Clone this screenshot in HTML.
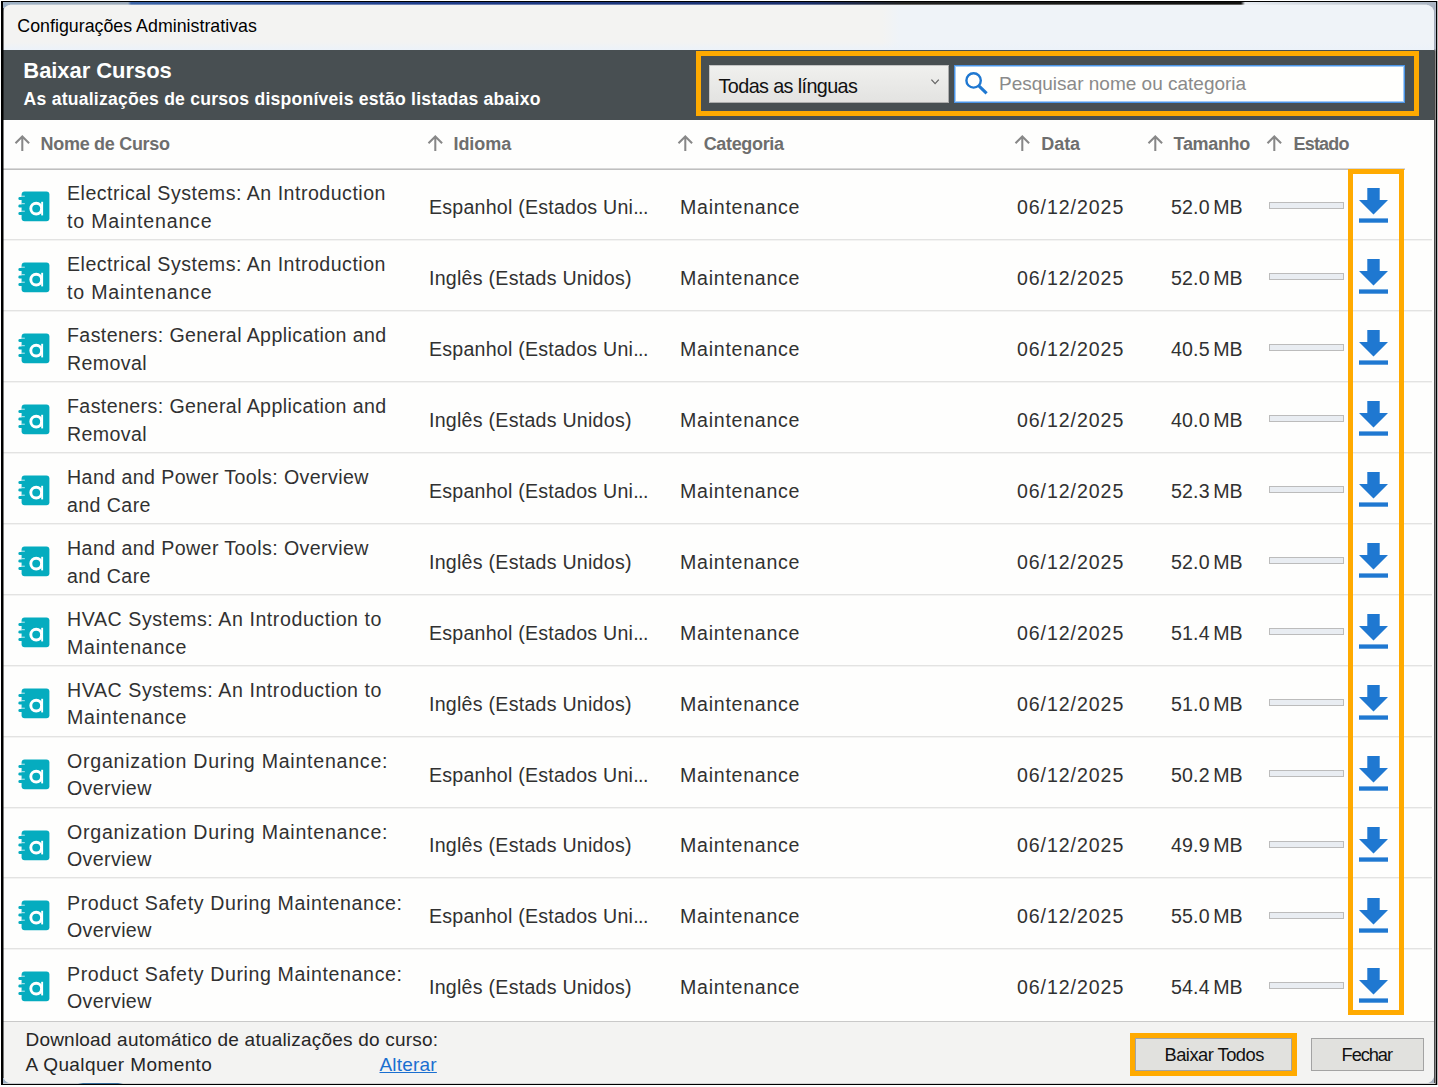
<!DOCTYPE html><html lang="pt-BR"><head><meta charset="utf-8"><title>Configurações Administrativas</title>
<style>
*{box-sizing:border-box}
html,body{margin:0;padding:0}
body{width:1438px;height:1087px;overflow:hidden;background:#fff;position:relative;font-family:"Liberation Sans", sans-serif;color:#262626}
.abs{position:absolute}
.t{position:absolute;white-space:pre;line-height:30px;height:30px}
#frame{left:1px;top:1px;width:1436px;height:1084px;background:#000}
#edgeR{left:1437px;top:1px;width:1px;height:1084px;background:#b8b8b8}
#desk{left:3px;top:2px;width:1433px;height:1082px;background:linear-gradient(90deg,#9fb2c6 0,#9aa9ba 125px,#3e66a8 128px,#1f3d8c 420px,#1a2f6e 800px,#222 900px,#111 1238px,#e6ebf2 1242px,#aab4c2 100%)}
#win{left:3px;top:5px;width:1431px;height:1078px;border-radius:8px;overflow:hidden;background:#f3f3f2}
#c{left:-3px;top:-5px;width:1438px;height:1087px}
#title{left:0;top:0;width:1438px;height:50px;background:linear-gradient(90deg,#f3f3f2 0,#f3f3f2 882px,#eff3f8 900px,#eff3f8 100%)}
#dark{left:0;top:50px;width:1438px;height:70px;background:#484f52}
#list{left:0;top:120px;width:1438px;height:901px;background:#fefefd}
#foot{left:0;top:1021px;width:1438px;height:66px;background:#f3f3f2;border-top:1px solid #c9c9c9}
.obox{position:absolute;border:5px solid #ffaa00}
.hd{font-weight:700;color:#6e6e6e;font-size:18px}
.sep{position:absolute;left:0;height:2px;background:linear-gradient(180deg,#e3e3e2 0,#e3e3e2 50%,#f3f3f2 50%,#f3f3f2 100%);width:1432px}
.cell{color:#313131}
.btn{position:absolute;background:#e1e1de;border:1px solid #a3a3a3}
.pb{position:absolute;left:1269px;width:75px;height:7px;border:1px solid #bcbcbc;background:#e9edf2}
</style></head><body>
<div id="frame" class="abs"></div><div id="edgeR" class="abs"></div><div id="desk" class="abs"></div><div class="abs" style="left:3px;top:1083px;width:1432px;height:1px;background:linear-gradient(90deg,#c9ccd0 0,#c9ccd0 75px,#3b6f9c 80px,#3b6f9c 115px,#d5d5d5 120px,#d0d0d0 100%)"></div><div class="abs" style="left:3px;top:8px;width:1px;height:1070px;background:rgba(0,0,0,0.5);z-index:5"></div><div class="abs" style="left:1434px;top:5px;width:1px;height:1078px;background:linear-gradient(180deg,#a4acba 0,#a4acba 44px,#4a4a4a 46px,#4a4a4a 100%)"></div><div class="abs" style="left:1435px;top:3px;width:1px;height:1081px;background:linear-gradient(180deg,#b4bccb 0,#b4bccb 46px,#8a8a8a 48px,#8a8a8a 100%)"></div>
<div class="abs" style="left:10px;top:4px;width:1417px;height:1px;background:rgba(243,243,242,0.35)"></div><div id="win" class="abs"><div id="c" class="abs">
<div id="title" class="abs"></div><div class="abs" style="left:0;top:42px;width:1438px;height:8px;background:linear-gradient(180deg,rgba(236,242,249,0),rgba(236,242,249,1))"></div>
<div class="t " style="left:17.3px;top:11.43px;font-size:17.8px;letter-spacing:0.015px;color:#000;">Configurações Administrativas</div>
<div id="dark" class="abs"></div>
<div class="t " style="left:23.3px;top:55.78px;font-size:22px;letter-spacing:-0.057px;color:#fff;font-weight:700;">Baixar Cursos</div>
<div class="t " style="left:23.6px;top:84.10px;font-size:17.6px;letter-spacing:0.228px;color:#fff;font-weight:700;">As atualizações de cursos disponíveis estão listadas abaixo</div>
<div class="obox" style="left:696px;top:51px;width:723px;height:65px"></div>
<div class="abs" style="left:709px;top:65px;width:240px;height:38px;border:1px solid #adadad;border-top-color:#c4c4c4;border-left-color:#c4c4c4;background:linear-gradient(#f0f0ee,#e3e3e1)"></div>
<div class="t " style="left:718.6px;top:70.54px;font-size:19.8px;letter-spacing:-0.611px;color:#111;">Todas as línguas</div>
<svg class="abs" style="left:929px;top:77px" width="12" height="10" viewBox="0 0 12 10"><path d="M2.4 2.6 L6.1 6.6 L9.8 2.6" fill="none" stroke="#666" stroke-width="1.35"/></svg>
<div class="abs" style="left:954px;top:65px;width:451px;height:38px;border:1px solid #4a94e6;box-shadow:inset 0 0 0 1px rgba(90,160,240,0.55);background:#fffffd"></div>
<svg class="abs" style="left:962.6px;top:70.2px" width="28" height="28" viewBox="0 0 28 28"><circle cx="10.6" cy="10.4" r="7.2" fill="none" stroke="#1f78d1" stroke-width="2.4"/><path d="M15.6 15.6 L23.6 23.4" stroke="#1f78d1" stroke-width="3.1" stroke-linecap="butt"/></svg>
<div class="t " style="left:999px;top:68.92px;font-size:19px;letter-spacing:0px;color:#8a8a8a;">Pesquisar nome ou categoria</div>
<div id="list" class="abs"></div>
<svg class="abs" style="left:13.7px;top:135px" width="17" height="17" viewBox="0 0 17 17"><path d="M8.3 1.4 V16 M1.5 8.3 L8.3 1.5 L15.1 8.3" fill="none" stroke="#888" stroke-width="2.05" stroke-linecap="butt" stroke-linejoin="miter"/></svg>
<div class="t hd" style="left:40.5px;top:129.26px;font-size:18px;letter-spacing:-0.29px;">Nome de Curso</div>
<svg class="abs" style="left:426.7px;top:135px" width="17" height="17" viewBox="0 0 17 17"><path d="M8.3 1.4 V16 M1.5 8.3 L8.3 1.5 L15.1 8.3" fill="none" stroke="#888" stroke-width="2.05" stroke-linecap="butt" stroke-linejoin="miter"/></svg>
<div class="t hd" style="left:453.5px;top:129.26px;font-size:18px;letter-spacing:-0.07px;">Idioma</div>
<svg class="abs" style="left:677.2px;top:135px" width="17" height="17" viewBox="0 0 17 17"><path d="M8.3 1.4 V16 M1.5 8.3 L8.3 1.5 L15.1 8.3" fill="none" stroke="#888" stroke-width="2.05" stroke-linecap="butt" stroke-linejoin="miter"/></svg>
<div class="t hd" style="left:703.7px;top:129.26px;font-size:18px;letter-spacing:-0.34px;">Categoria</div>
<svg class="abs" style="left:1014.4000000000001px;top:135px" width="17" height="17" viewBox="0 0 17 17"><path d="M8.3 1.4 V16 M1.5 8.3 L8.3 1.5 L15.1 8.3" fill="none" stroke="#888" stroke-width="2.05" stroke-linecap="butt" stroke-linejoin="miter"/></svg>
<div class="t hd" style="left:1041.2px;top:129.26px;font-size:18px;letter-spacing:-0.03px;">Data</div>
<svg class="abs" style="left:1146.7px;top:135px" width="17" height="17" viewBox="0 0 17 17"><path d="M8.3 1.4 V16 M1.5 8.3 L8.3 1.5 L15.1 8.3" fill="none" stroke="#888" stroke-width="2.05" stroke-linecap="butt" stroke-linejoin="miter"/></svg>
<div class="t hd" style="left:1173.6px;top:129.26px;font-size:18px;letter-spacing:-0.34px;">Tamanho</div>
<svg class="abs" style="left:1266.2px;top:135px" width="17" height="17" viewBox="0 0 17 17"><path d="M8.3 1.4 V16 M1.5 8.3 L8.3 1.5 L15.1 8.3" fill="none" stroke="#888" stroke-width="2.05" stroke-linecap="butt" stroke-linejoin="miter"/></svg>
<div class="t hd" style="left:1293.5px;top:129.26px;font-size:18px;letter-spacing:-0.8px;">Estado</div>
<div class="abs" style="left:0;top:168px;width:1405px;height:1px;background:#d9d9d9"></div><div class="abs" style="left:0;top:169px;width:1405px;height:1px;background:#bfbfbf"></div>
<svg class="abs" style="left:18px;top:191px" width="32" height="31" viewBox="0 0 32 31"><rect x="3.6" y="0.4" width="27.8" height="29.8" rx="3" ry="3" fill="#05acbf"/><rect x="0.4" y="5.9" width="6.5" height="3.2" rx="1.4" fill="#05acbf"/><rect x="0.4" y="13.4" width="6.5" height="3.2" rx="1.4" fill="#05acbf"/><rect x="0.4" y="20.9" width="6.5" height="3.2" rx="1.4" fill="#05acbf"/><rect x="3.6" y="4.7" width="3.2" height="1" fill="#fff" opacity=".75"/><rect x="3.6" y="12.2" width="3.2" height="1" fill="#fff" opacity=".75"/><rect x="3.6" y="19.7" width="3.2" height="1" fill="#fff" opacity=".75"/><circle cx="18.2" cy="17.6" r="5.4" fill="none" stroke="#fff" stroke-width="2.9"/><rect x="23.2" y="10.8" width="1.9" height="13.6" fill="#fff"/></svg>
<div class="t cell" style="left:67px;top:178.21px;font-size:19.6px;letter-spacing:0.495px;">Electrical Systems: An Introduction</div>
<div class="t cell" style="left:67px;top:205.81px;font-size:19.6px;letter-spacing:0.817px;">to Maintenance</div>
<div class="t cell" style="left:429px;top:191.91px;font-size:19.6px;letter-spacing:0.229px;">Espanhol (Estados Uni<span style="letter-spacing:-0.45px">...</span></div>
<div class="t cell" style="left:680px;top:191.91px;font-size:19.6px;letter-spacing:0.73px;">Maintenance</div>
<div class="t cell" style="left:1017px;top:191.91px;font-size:19.6px;letter-spacing:0.914px;">06/12/2025</div>
<div class="t cell" style="left:1171px;top:191.91px;font-size:19.6px;letter-spacing:0.153px;word-spacing:-2.2px;">52.0 MB</div>
<div class="pb" style="top:202px"></div>
<svg class="abs" style="left:1359px;top:188px" width="30" height="36" viewBox="0 0 30 36"><path d="M8.3 0 H20.7 V12 H29 L14.5 26.6 L0 12 H8.3 Z" fill="#1f78d1"/><rect x="0" y="30.4" width="29" height="4.3" fill="#1f78d1"/></svg>
<div class="sep" style="top:239px"></div>
<svg class="abs" style="left:18px;top:262px" width="32" height="31" viewBox="0 0 32 31"><rect x="3.6" y="0.4" width="27.8" height="29.8" rx="3" ry="3" fill="#05acbf"/><rect x="0.4" y="5.9" width="6.5" height="3.2" rx="1.4" fill="#05acbf"/><rect x="0.4" y="13.4" width="6.5" height="3.2" rx="1.4" fill="#05acbf"/><rect x="0.4" y="20.9" width="6.5" height="3.2" rx="1.4" fill="#05acbf"/><rect x="3.6" y="4.7" width="3.2" height="1" fill="#fff" opacity=".75"/><rect x="3.6" y="12.2" width="3.2" height="1" fill="#fff" opacity=".75"/><rect x="3.6" y="19.7" width="3.2" height="1" fill="#fff" opacity=".75"/><circle cx="18.2" cy="17.6" r="5.4" fill="none" stroke="#fff" stroke-width="2.9"/><rect x="23.2" y="10.8" width="1.9" height="13.6" fill="#fff"/></svg>
<div class="t cell" style="left:67px;top:249.16px;font-size:19.6px;letter-spacing:0.495px;">Electrical Systems: An Introduction</div>
<div class="t cell" style="left:67px;top:276.76px;font-size:19.6px;letter-spacing:0.817px;">to Maintenance</div>
<div class="t cell" style="left:429px;top:262.86px;font-size:19.6px;letter-spacing:0.256px;">Inglês (Estads Unidos)</div>
<div class="t cell" style="left:680px;top:262.86px;font-size:19.6px;letter-spacing:0.73px;">Maintenance</div>
<div class="t cell" style="left:1017px;top:262.86px;font-size:19.6px;letter-spacing:0.914px;">06/12/2025</div>
<div class="t cell" style="left:1171px;top:262.86px;font-size:19.6px;letter-spacing:0.153px;word-spacing:-2.2px;">52.0 MB</div>
<div class="pb" style="top:273px"></div>
<svg class="abs" style="left:1359px;top:259px" width="30" height="36" viewBox="0 0 30 36"><path d="M8.3 0 H20.7 V12 H29 L14.5 26.6 L0 12 H8.3 Z" fill="#1f78d1"/><rect x="0" y="30.4" width="29" height="4.3" fill="#1f78d1"/></svg>
<div class="sep" style="top:310px"></div>
<svg class="abs" style="left:18px;top:333px" width="32" height="31" viewBox="0 0 32 31"><rect x="3.6" y="0.4" width="27.8" height="29.8" rx="3" ry="3" fill="#05acbf"/><rect x="0.4" y="5.9" width="6.5" height="3.2" rx="1.4" fill="#05acbf"/><rect x="0.4" y="13.4" width="6.5" height="3.2" rx="1.4" fill="#05acbf"/><rect x="0.4" y="20.9" width="6.5" height="3.2" rx="1.4" fill="#05acbf"/><rect x="3.6" y="4.7" width="3.2" height="1" fill="#fff" opacity=".75"/><rect x="3.6" y="12.2" width="3.2" height="1" fill="#fff" opacity=".75"/><rect x="3.6" y="19.7" width="3.2" height="1" fill="#fff" opacity=".75"/><circle cx="18.2" cy="17.6" r="5.4" fill="none" stroke="#fff" stroke-width="2.9"/><rect x="23.2" y="10.8" width="1.9" height="13.6" fill="#fff"/></svg>
<div class="t cell" style="left:67px;top:320.11px;font-size:19.6px;letter-spacing:0.398px;">Fasteners: General Application and</div>
<div class="t cell" style="left:67px;top:347.71px;font-size:19.6px;letter-spacing:0.395px;">Removal</div>
<div class="t cell" style="left:429px;top:333.81px;font-size:19.6px;letter-spacing:0.229px;">Espanhol (Estados Uni<span style="letter-spacing:-0.45px">...</span></div>
<div class="t cell" style="left:680px;top:333.81px;font-size:19.6px;letter-spacing:0.73px;">Maintenance</div>
<div class="t cell" style="left:1017px;top:333.81px;font-size:19.6px;letter-spacing:0.914px;">06/12/2025</div>
<div class="t cell" style="left:1171px;top:333.81px;font-size:19.6px;letter-spacing:0.153px;word-spacing:-2.2px;">40.5 MB</div>
<div class="pb" style="top:344px"></div>
<svg class="abs" style="left:1359px;top:330px" width="30" height="36" viewBox="0 0 30 36"><path d="M8.3 0 H20.7 V12 H29 L14.5 26.6 L0 12 H8.3 Z" fill="#1f78d1"/><rect x="0" y="30.4" width="29" height="4.3" fill="#1f78d1"/></svg>
<div class="sep" style="top:381px"></div>
<svg class="abs" style="left:18px;top:404px" width="32" height="31" viewBox="0 0 32 31"><rect x="3.6" y="0.4" width="27.8" height="29.8" rx="3" ry="3" fill="#05acbf"/><rect x="0.4" y="5.9" width="6.5" height="3.2" rx="1.4" fill="#05acbf"/><rect x="0.4" y="13.4" width="6.5" height="3.2" rx="1.4" fill="#05acbf"/><rect x="0.4" y="20.9" width="6.5" height="3.2" rx="1.4" fill="#05acbf"/><rect x="3.6" y="4.7" width="3.2" height="1" fill="#fff" opacity=".75"/><rect x="3.6" y="12.2" width="3.2" height="1" fill="#fff" opacity=".75"/><rect x="3.6" y="19.7" width="3.2" height="1" fill="#fff" opacity=".75"/><circle cx="18.2" cy="17.6" r="5.4" fill="none" stroke="#fff" stroke-width="2.9"/><rect x="23.2" y="10.8" width="1.9" height="13.6" fill="#fff"/></svg>
<div class="t cell" style="left:67px;top:391.06px;font-size:19.6px;letter-spacing:0.398px;">Fasteners: General Application and</div>
<div class="t cell" style="left:67px;top:418.66px;font-size:19.6px;letter-spacing:0.395px;">Removal</div>
<div class="t cell" style="left:429px;top:404.76px;font-size:19.6px;letter-spacing:0.256px;">Inglês (Estads Unidos)</div>
<div class="t cell" style="left:680px;top:404.76px;font-size:19.6px;letter-spacing:0.73px;">Maintenance</div>
<div class="t cell" style="left:1017px;top:404.76px;font-size:19.6px;letter-spacing:0.914px;">06/12/2025</div>
<div class="t cell" style="left:1171px;top:404.76px;font-size:19.6px;letter-spacing:0.153px;word-spacing:-2.2px;">40.0 MB</div>
<div class="pb" style="top:415px"></div>
<svg class="abs" style="left:1359px;top:401px" width="30" height="36" viewBox="0 0 30 36"><path d="M8.3 0 H20.7 V12 H29 L14.5 26.6 L0 12 H8.3 Z" fill="#1f78d1"/><rect x="0" y="30.4" width="29" height="4.3" fill="#1f78d1"/></svg>
<div class="sep" style="top:452px"></div>
<svg class="abs" style="left:18px;top:475px" width="32" height="31" viewBox="0 0 32 31"><rect x="3.6" y="0.4" width="27.8" height="29.8" rx="3" ry="3" fill="#05acbf"/><rect x="0.4" y="5.9" width="6.5" height="3.2" rx="1.4" fill="#05acbf"/><rect x="0.4" y="13.4" width="6.5" height="3.2" rx="1.4" fill="#05acbf"/><rect x="0.4" y="20.9" width="6.5" height="3.2" rx="1.4" fill="#05acbf"/><rect x="3.6" y="4.7" width="3.2" height="1" fill="#fff" opacity=".75"/><rect x="3.6" y="12.2" width="3.2" height="1" fill="#fff" opacity=".75"/><rect x="3.6" y="19.7" width="3.2" height="1" fill="#fff" opacity=".75"/><circle cx="18.2" cy="17.6" r="5.4" fill="none" stroke="#fff" stroke-width="2.9"/><rect x="23.2" y="10.8" width="1.9" height="13.6" fill="#fff"/></svg>
<div class="t cell" style="left:67px;top:462.01px;font-size:19.6px;letter-spacing:0.419px;">Hand and Power Tools: Overview</div>
<div class="t cell" style="left:67px;top:489.61px;font-size:19.6px;letter-spacing:0.413px;">and Care</div>
<div class="t cell" style="left:429px;top:475.71px;font-size:19.6px;letter-spacing:0.229px;">Espanhol (Estados Uni<span style="letter-spacing:-0.45px">...</span></div>
<div class="t cell" style="left:680px;top:475.71px;font-size:19.6px;letter-spacing:0.73px;">Maintenance</div>
<div class="t cell" style="left:1017px;top:475.71px;font-size:19.6px;letter-spacing:0.914px;">06/12/2025</div>
<div class="t cell" style="left:1171px;top:475.71px;font-size:19.6px;letter-spacing:0.153px;word-spacing:-2.2px;">52.3 MB</div>
<div class="pb" style="top:486px"></div>
<svg class="abs" style="left:1359px;top:472px" width="30" height="36" viewBox="0 0 30 36"><path d="M8.3 0 H20.7 V12 H29 L14.5 26.6 L0 12 H8.3 Z" fill="#1f78d1"/><rect x="0" y="30.4" width="29" height="4.3" fill="#1f78d1"/></svg>
<div class="sep" style="top:523px"></div>
<svg class="abs" style="left:18px;top:546px" width="32" height="31" viewBox="0 0 32 31"><rect x="3.6" y="0.4" width="27.8" height="29.8" rx="3" ry="3" fill="#05acbf"/><rect x="0.4" y="5.9" width="6.5" height="3.2" rx="1.4" fill="#05acbf"/><rect x="0.4" y="13.4" width="6.5" height="3.2" rx="1.4" fill="#05acbf"/><rect x="0.4" y="20.9" width="6.5" height="3.2" rx="1.4" fill="#05acbf"/><rect x="3.6" y="4.7" width="3.2" height="1" fill="#fff" opacity=".75"/><rect x="3.6" y="12.2" width="3.2" height="1" fill="#fff" opacity=".75"/><rect x="3.6" y="19.7" width="3.2" height="1" fill="#fff" opacity=".75"/><circle cx="18.2" cy="17.6" r="5.4" fill="none" stroke="#fff" stroke-width="2.9"/><rect x="23.2" y="10.8" width="1.9" height="13.6" fill="#fff"/></svg>
<div class="t cell" style="left:67px;top:532.96px;font-size:19.6px;letter-spacing:0.419px;">Hand and Power Tools: Overview</div>
<div class="t cell" style="left:67px;top:560.56px;font-size:19.6px;letter-spacing:0.413px;">and Care</div>
<div class="t cell" style="left:429px;top:546.66px;font-size:19.6px;letter-spacing:0.256px;">Inglês (Estads Unidos)</div>
<div class="t cell" style="left:680px;top:546.66px;font-size:19.6px;letter-spacing:0.73px;">Maintenance</div>
<div class="t cell" style="left:1017px;top:546.66px;font-size:19.6px;letter-spacing:0.914px;">06/12/2025</div>
<div class="t cell" style="left:1171px;top:546.66px;font-size:19.6px;letter-spacing:0.153px;word-spacing:-2.2px;">52.0 MB</div>
<div class="pb" style="top:557px"></div>
<svg class="abs" style="left:1359px;top:543px" width="30" height="36" viewBox="0 0 30 36"><path d="M8.3 0 H20.7 V12 H29 L14.5 26.6 L0 12 H8.3 Z" fill="#1f78d1"/><rect x="0" y="30.4" width="29" height="4.3" fill="#1f78d1"/></svg>
<div class="sep" style="top:594px"></div>
<svg class="abs" style="left:18px;top:617px" width="32" height="31" viewBox="0 0 32 31"><rect x="3.6" y="0.4" width="27.8" height="29.8" rx="3" ry="3" fill="#05acbf"/><rect x="0.4" y="5.9" width="6.5" height="3.2" rx="1.4" fill="#05acbf"/><rect x="0.4" y="13.4" width="6.5" height="3.2" rx="1.4" fill="#05acbf"/><rect x="0.4" y="20.9" width="6.5" height="3.2" rx="1.4" fill="#05acbf"/><rect x="3.6" y="4.7" width="3.2" height="1" fill="#fff" opacity=".75"/><rect x="3.6" y="12.2" width="3.2" height="1" fill="#fff" opacity=".75"/><rect x="3.6" y="19.7" width="3.2" height="1" fill="#fff" opacity=".75"/><circle cx="18.2" cy="17.6" r="5.4" fill="none" stroke="#fff" stroke-width="2.9"/><rect x="23.2" y="10.8" width="1.9" height="13.6" fill="#fff"/></svg>
<div class="t cell" style="left:67px;top:603.91px;font-size:19.6px;letter-spacing:0.566px;">HVAC Systems: An Introduction to</div>
<div class="t cell" style="left:67px;top:631.51px;font-size:19.6px;letter-spacing:0.73px;">Maintenance</div>
<div class="t cell" style="left:429px;top:617.61px;font-size:19.6px;letter-spacing:0.229px;">Espanhol (Estados Uni<span style="letter-spacing:-0.45px">...</span></div>
<div class="t cell" style="left:680px;top:617.61px;font-size:19.6px;letter-spacing:0.73px;">Maintenance</div>
<div class="t cell" style="left:1017px;top:617.61px;font-size:19.6px;letter-spacing:0.914px;">06/12/2025</div>
<div class="t cell" style="left:1171px;top:617.61px;font-size:19.6px;letter-spacing:0.153px;word-spacing:-2.2px;">51.4 MB</div>
<div class="pb" style="top:628px"></div>
<svg class="abs" style="left:1359px;top:614px" width="30" height="36" viewBox="0 0 30 36"><path d="M8.3 0 H20.7 V12 H29 L14.5 26.6 L0 12 H8.3 Z" fill="#1f78d1"/><rect x="0" y="30.4" width="29" height="4.3" fill="#1f78d1"/></svg>
<div class="sep" style="top:665px"></div>
<svg class="abs" style="left:18px;top:688px" width="32" height="31" viewBox="0 0 32 31"><rect x="3.6" y="0.4" width="27.8" height="29.8" rx="3" ry="3" fill="#05acbf"/><rect x="0.4" y="5.9" width="6.5" height="3.2" rx="1.4" fill="#05acbf"/><rect x="0.4" y="13.4" width="6.5" height="3.2" rx="1.4" fill="#05acbf"/><rect x="0.4" y="20.9" width="6.5" height="3.2" rx="1.4" fill="#05acbf"/><rect x="3.6" y="4.7" width="3.2" height="1" fill="#fff" opacity=".75"/><rect x="3.6" y="12.2" width="3.2" height="1" fill="#fff" opacity=".75"/><rect x="3.6" y="19.7" width="3.2" height="1" fill="#fff" opacity=".75"/><circle cx="18.2" cy="17.6" r="5.4" fill="none" stroke="#fff" stroke-width="2.9"/><rect x="23.2" y="10.8" width="1.9" height="13.6" fill="#fff"/></svg>
<div class="t cell" style="left:67px;top:674.86px;font-size:19.6px;letter-spacing:0.566px;">HVAC Systems: An Introduction to</div>
<div class="t cell" style="left:67px;top:702.46px;font-size:19.6px;letter-spacing:0.73px;">Maintenance</div>
<div class="t cell" style="left:429px;top:688.56px;font-size:19.6px;letter-spacing:0.256px;">Inglês (Estads Unidos)</div>
<div class="t cell" style="left:680px;top:688.56px;font-size:19.6px;letter-spacing:0.73px;">Maintenance</div>
<div class="t cell" style="left:1017px;top:688.56px;font-size:19.6px;letter-spacing:0.914px;">06/12/2025</div>
<div class="t cell" style="left:1171px;top:688.56px;font-size:19.6px;letter-spacing:0.153px;word-spacing:-2.2px;">51.0 MB</div>
<div class="pb" style="top:699px"></div>
<svg class="abs" style="left:1359px;top:685px" width="30" height="36" viewBox="0 0 30 36"><path d="M8.3 0 H20.7 V12 H29 L14.5 26.6 L0 12 H8.3 Z" fill="#1f78d1"/><rect x="0" y="30.4" width="29" height="4.3" fill="#1f78d1"/></svg>
<div class="sep" style="top:736px"></div>
<svg class="abs" style="left:18px;top:759px" width="32" height="31" viewBox="0 0 32 31"><rect x="3.6" y="0.4" width="27.8" height="29.8" rx="3" ry="3" fill="#05acbf"/><rect x="0.4" y="5.9" width="6.5" height="3.2" rx="1.4" fill="#05acbf"/><rect x="0.4" y="13.4" width="6.5" height="3.2" rx="1.4" fill="#05acbf"/><rect x="0.4" y="20.9" width="6.5" height="3.2" rx="1.4" fill="#05acbf"/><rect x="3.6" y="4.7" width="3.2" height="1" fill="#fff" opacity=".75"/><rect x="3.6" y="12.2" width="3.2" height="1" fill="#fff" opacity=".75"/><rect x="3.6" y="19.7" width="3.2" height="1" fill="#fff" opacity=".75"/><circle cx="18.2" cy="17.6" r="5.4" fill="none" stroke="#fff" stroke-width="2.9"/><rect x="23.2" y="10.8" width="1.9" height="13.6" fill="#fff"/></svg>
<div class="t cell" style="left:67px;top:745.81px;font-size:19.6px;letter-spacing:0.747px;">Organization During Maintenance:</div>
<div class="t cell" style="left:67px;top:773.41px;font-size:19.6px;letter-spacing:0.375px;">Overview</div>
<div class="t cell" style="left:429px;top:759.51px;font-size:19.6px;letter-spacing:0.229px;">Espanhol (Estados Uni<span style="letter-spacing:-0.45px">...</span></div>
<div class="t cell" style="left:680px;top:759.51px;font-size:19.6px;letter-spacing:0.73px;">Maintenance</div>
<div class="t cell" style="left:1017px;top:759.51px;font-size:19.6px;letter-spacing:0.914px;">06/12/2025</div>
<div class="t cell" style="left:1171px;top:759.51px;font-size:19.6px;letter-spacing:0.153px;word-spacing:-2.2px;">50.2 MB</div>
<div class="pb" style="top:770px"></div>
<svg class="abs" style="left:1359px;top:756px" width="30" height="36" viewBox="0 0 30 36"><path d="M8.3 0 H20.7 V12 H29 L14.5 26.6 L0 12 H8.3 Z" fill="#1f78d1"/><rect x="0" y="30.4" width="29" height="4.3" fill="#1f78d1"/></svg>
<div class="sep" style="top:807px"></div>
<svg class="abs" style="left:18px;top:830px" width="32" height="31" viewBox="0 0 32 31"><rect x="3.6" y="0.4" width="27.8" height="29.8" rx="3" ry="3" fill="#05acbf"/><rect x="0.4" y="5.9" width="6.5" height="3.2" rx="1.4" fill="#05acbf"/><rect x="0.4" y="13.4" width="6.5" height="3.2" rx="1.4" fill="#05acbf"/><rect x="0.4" y="20.9" width="6.5" height="3.2" rx="1.4" fill="#05acbf"/><rect x="3.6" y="4.7" width="3.2" height="1" fill="#fff" opacity=".75"/><rect x="3.6" y="12.2" width="3.2" height="1" fill="#fff" opacity=".75"/><rect x="3.6" y="19.7" width="3.2" height="1" fill="#fff" opacity=".75"/><circle cx="18.2" cy="17.6" r="5.4" fill="none" stroke="#fff" stroke-width="2.9"/><rect x="23.2" y="10.8" width="1.9" height="13.6" fill="#fff"/></svg>
<div class="t cell" style="left:67px;top:816.76px;font-size:19.6px;letter-spacing:0.747px;">Organization During Maintenance:</div>
<div class="t cell" style="left:67px;top:844.36px;font-size:19.6px;letter-spacing:0.375px;">Overview</div>
<div class="t cell" style="left:429px;top:830.46px;font-size:19.6px;letter-spacing:0.256px;">Inglês (Estads Unidos)</div>
<div class="t cell" style="left:680px;top:830.46px;font-size:19.6px;letter-spacing:0.73px;">Maintenance</div>
<div class="t cell" style="left:1017px;top:830.46px;font-size:19.6px;letter-spacing:0.914px;">06/12/2025</div>
<div class="t cell" style="left:1171px;top:830.46px;font-size:19.6px;letter-spacing:0.153px;word-spacing:-2.2px;">49.9 MB</div>
<div class="pb" style="top:841px"></div>
<svg class="abs" style="left:1359px;top:827px" width="30" height="36" viewBox="0 0 30 36"><path d="M8.3 0 H20.7 V12 H29 L14.5 26.6 L0 12 H8.3 Z" fill="#1f78d1"/><rect x="0" y="30.4" width="29" height="4.3" fill="#1f78d1"/></svg>
<div class="sep" style="top:877px"></div>
<svg class="abs" style="left:18px;top:900px" width="32" height="31" viewBox="0 0 32 31"><rect x="3.6" y="0.4" width="27.8" height="29.8" rx="3" ry="3" fill="#05acbf"/><rect x="0.4" y="5.9" width="6.5" height="3.2" rx="1.4" fill="#05acbf"/><rect x="0.4" y="13.4" width="6.5" height="3.2" rx="1.4" fill="#05acbf"/><rect x="0.4" y="20.9" width="6.5" height="3.2" rx="1.4" fill="#05acbf"/><rect x="3.6" y="4.7" width="3.2" height="1" fill="#fff" opacity=".75"/><rect x="3.6" y="12.2" width="3.2" height="1" fill="#fff" opacity=".75"/><rect x="3.6" y="19.7" width="3.2" height="1" fill="#fff" opacity=".75"/><circle cx="18.2" cy="17.6" r="5.4" fill="none" stroke="#fff" stroke-width="2.9"/><rect x="23.2" y="10.8" width="1.9" height="13.6" fill="#fff"/></svg>
<div class="t cell" style="left:67px;top:887.71px;font-size:19.6px;letter-spacing:0.613px;">Product Safety During Maintenance:</div>
<div class="t cell" style="left:67px;top:915.31px;font-size:19.6px;letter-spacing:0.375px;">Overview</div>
<div class="t cell" style="left:429px;top:901.41px;font-size:19.6px;letter-spacing:0.229px;">Espanhol (Estados Uni<span style="letter-spacing:-0.45px">...</span></div>
<div class="t cell" style="left:680px;top:901.41px;font-size:19.6px;letter-spacing:0.73px;">Maintenance</div>
<div class="t cell" style="left:1017px;top:901.41px;font-size:19.6px;letter-spacing:0.914px;">06/12/2025</div>
<div class="t cell" style="left:1171px;top:901.41px;font-size:19.6px;letter-spacing:0.153px;word-spacing:-2.2px;">55.0 MB</div>
<div class="pb" style="top:912px"></div>
<svg class="abs" style="left:1359px;top:898px" width="30" height="36" viewBox="0 0 30 36"><path d="M8.3 0 H20.7 V12 H29 L14.5 26.6 L0 12 H8.3 Z" fill="#1f78d1"/><rect x="0" y="30.4" width="29" height="4.3" fill="#1f78d1"/></svg>
<div class="sep" style="top:948px"></div>
<svg class="abs" style="left:18px;top:971px" width="32" height="31" viewBox="0 0 32 31"><rect x="3.6" y="0.4" width="27.8" height="29.8" rx="3" ry="3" fill="#05acbf"/><rect x="0.4" y="5.9" width="6.5" height="3.2" rx="1.4" fill="#05acbf"/><rect x="0.4" y="13.4" width="6.5" height="3.2" rx="1.4" fill="#05acbf"/><rect x="0.4" y="20.9" width="6.5" height="3.2" rx="1.4" fill="#05acbf"/><rect x="3.6" y="4.7" width="3.2" height="1" fill="#fff" opacity=".75"/><rect x="3.6" y="12.2" width="3.2" height="1" fill="#fff" opacity=".75"/><rect x="3.6" y="19.7" width="3.2" height="1" fill="#fff" opacity=".75"/><circle cx="18.2" cy="17.6" r="5.4" fill="none" stroke="#fff" stroke-width="2.9"/><rect x="23.2" y="10.8" width="1.9" height="13.6" fill="#fff"/></svg>
<div class="t cell" style="left:67px;top:958.66px;font-size:19.6px;letter-spacing:0.613px;">Product Safety During Maintenance:</div>
<div class="t cell" style="left:67px;top:986.26px;font-size:19.6px;letter-spacing:0.375px;">Overview</div>
<div class="t cell" style="left:429px;top:972.36px;font-size:19.6px;letter-spacing:0.256px;">Inglês (Estads Unidos)</div>
<div class="t cell" style="left:680px;top:972.36px;font-size:19.6px;letter-spacing:0.73px;">Maintenance</div>
<div class="t cell" style="left:1017px;top:972.36px;font-size:19.6px;letter-spacing:0.914px;">06/12/2025</div>
<div class="t cell" style="left:1171px;top:972.36px;font-size:19.6px;letter-spacing:0.153px;word-spacing:-2.2px;">54.4 MB</div>
<div class="pb" style="top:982px"></div>
<svg class="abs" style="left:1359px;top:968px" width="30" height="36" viewBox="0 0 30 36"><path d="M8.3 0 H20.7 V12 H29 L14.5 26.6 L0 12 H8.3 Z" fill="#1f78d1"/><rect x="0" y="30.4" width="29" height="4.3" fill="#1f78d1"/></svg>
<div class="obox" style="left:1348px;top:169px;width:56px;height:846px"></div>
<div id="foot" class="abs"></div>
<div class="t " style="left:25.5px;top:1024.72px;font-size:19px;letter-spacing:0.205px;">Download automático de atualizações do curso:</div>
<div class="t " style="left:25.5px;top:1049.92px;font-size:19px;letter-spacing:0.4px;">A Qualquer Momento</div>
<div class="t " style="left:379.5px;top:1049.92px;font-size:19px;letter-spacing:0.2px;color:#1a6fd0;text-decoration:underline;">Alterar</div>
<div class="obox" style="left:1130px;top:1033px;width:167px;height:43px"></div>
<div class="btn" style="left:1135px;top:1038px;width:157px;height:33px"></div>
<div class="t " style="left:1164.5px;top:1039.96px;font-size:18.3px;letter-spacing:-0.5px;color:#111;">Baixar Todos</div>
<div class="btn" style="left:1311px;top:1038px;width:113px;height:33px"></div>
<div class="t " style="left:1341.6px;top:1039.96px;font-size:18.3px;letter-spacing:-1.1px;color:#111;">Fechar</div>
</div></div></body></html>
